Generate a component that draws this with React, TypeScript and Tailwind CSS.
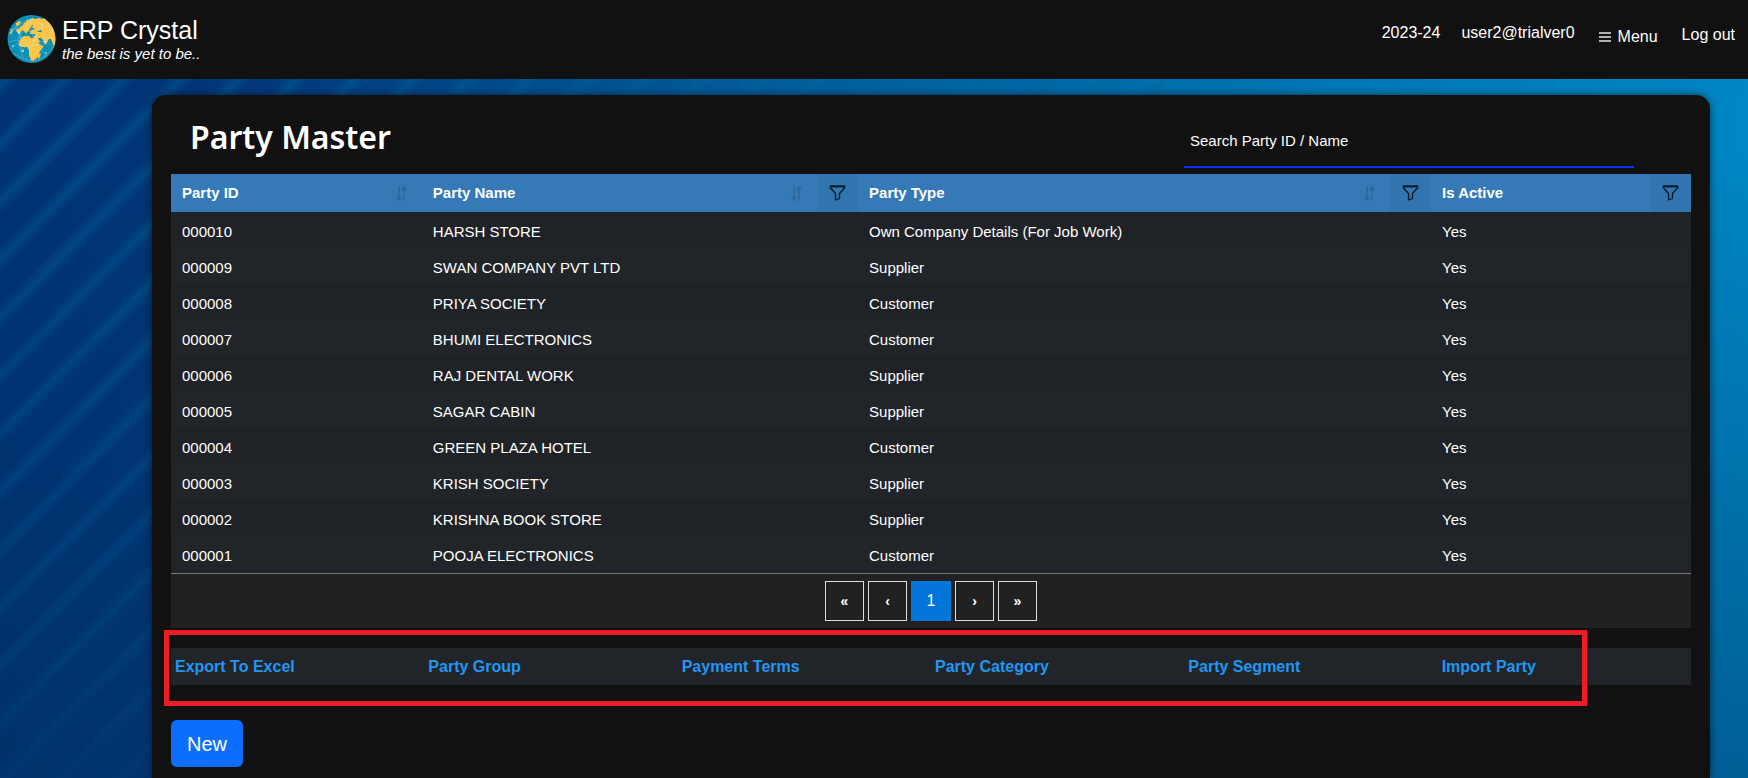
import React from "react";

type Party = { id: string; name: string; type: string };

const parties: Party[] = [
  { id: "000010", name: "HARSH STORE", type: "Own Company Details (For Job Work)" },
  { id: "000009", name: "SWAN COMPANY PVT LTD", type: "Supplier" },
  { id: "000008", name: "PRIYA SOCIETY", type: "Customer" },
  { id: "000007", name: "BHUMI ELECTRONICS", type: "Customer" },
  { id: "000006", name: "RAJ DENTAL WORK", type: "Supplier" },
  { id: "000005", name: "SAGAR CABIN", type: "Supplier" },
  { id: "000004", name: "GREEN PLAZA HOTEL", type: "Customer" },
  { id: "000003", name: "KRISH SOCIETY", type: "Supplier" },
  { id: "000002", name: "KRISHNA BOOK STORE", type: "Supplier" },
  { id: "000001", name: "POOJA ELECTRONICS", type: "Customer" },
];

const links = ["Export To Excel", "Party Group", "Payment Terms", "Party Category", "Party Segment", "Import Party"];

function Globe() {
  return (
    <svg viewBox="0 0 49 48" className="h-12 w-[49px] shrink-0" aria-hidden="true">
      <defs>
        <clipPath id="globe">
          <circle cx="24.5" cy="24" r="24" />
        </clipPath>
      </defs>
      <g clipPath="url(#globe)">
        <rect width="49" height="48" fill="#0a8fb5" />
        <g fill="#fdc543">
          <path d="M22 6l3-3 4 1 3-1 3 1 4-2 10 9v21l-2-1-2-4-1-3-2 0-3 5-1 1-2-5-2-2-3 0 2 4-3 2-3-6-1-3-3 0-1-1 2-2-2-1-2 1-1 2-2-3-2-1-1 2-3 1-2-2 1-2 3 0 0-2 3-2 1-2 2-1 1-3z" />
          <path d="M14 23l3-2 5 0 2 2 4 0 2 1 3 6 4 1-4 5-1 4-3 4-3 2-2-1-2-5 0-5-2-3-6 0-2-3z" />
          <path d="M34 38l-3 2 0 4 2-2zM9 8l3-2 2 1-2 3-3 1zM3 18l2-4 1 1-2 5zM17 11l2 1 0 3-3 1z" />
        </g>
        <path d="M23 13l2-3 1 0-1 3 3 0-2 2-4 1zM18 19l3-1 3 1 4 0 0 2-4 0-4-1zM30 16l4-1 1 2-4 0z" fill="#1789a4" />
        <g fill="none" stroke="#bfe6e8" strokeWidth=".5" opacity=".65">
          <path d="M2 18l10-8 11-6 12 5 11 8-8 9 9 6-8 9-12 6-12-4-12-6-7-9 5-13 11-2 2 12-11 10-7-7 14-3 12 6 14-2M12 10l0 13 11-19M23 37l4-12-4-21M35 9l-8 16 11 2-3-18M12 37l15-12M16 43l-5-20M39 41l-12-16M37 2l9 15M7 10l6 8" />
        </g>
        <g fill="#e4f7f5">
          <circle cx="12" cy="18" r=".9" /><circle cx="6" cy="31" r=".8" /><circle cx="16" cy="36" r=".9" />
          <circle cx="27" cy="25" r=".7" /><circle cx="35" cy="9" r=".7" /><circle cx="39" cy="38" r=".8" />
          <circle cx="23" cy="5" r=".7" /><circle cx="12" cy="30" r=".7" /><circle cx="38" cy="27" r=".7" />
        </g>
      </g>
    </svg>
  );
}

function SortIcon() {
  return (
    <svg viewBox="0 0 11 15" className="h-[15px] w-[11px] opacity-15" fill="none" stroke="#000000" strokeWidth="1.6" aria-hidden="true">
      <path d="M3 0v13M0.500 11L3 13.700l2.500-2.700M8 15V1.500M5.500 4L8 1.300 10.500 4" />
    </svg>
  );
}

function FilterIcon() {
  return (
    <svg viewBox="0 0 17 16" className="h-4 w-[17px]" fill="none" stroke="#0d1a26" strokeWidth="1.3" strokeLinejoin="round" aria-hidden="true">
      <path d="M1.300 1.200h14.400v1.600L10.500 8.500v5L6.500 15V8.500L1.300 2.800z" />
      <path d="M1 1.500h15" strokeWidth="1.800" />
    </svg>
  );
}

function HeaderCell({ label, sort, filter }: { label: string; sort?: boolean; filter?: boolean }) {
  return (
    <th scope="col" className="p-0 text-left font-bold">
      <div className="flex h-[38px] items-center">
        <span className="flex-1 pl-[11px]">{label}</span>
        {sort && (
          <button type="button" aria-label={`Sort by ${label}`} className="mr-[15px]">
            <SortIcon />
          </button>
        )}
        {filter && (
          <button type="button" aria-label={`Filter ${label}`} className="flex h-full w-[41px] items-center justify-center bg-[#3175b0]">
            <FilterIcon />
          </button>
        )}
      </div>
    </th>
  );
}

const pageButton = "h-10 w-[39px] border border-[#dddddd] bg-[#212121] text-sm font-bold";

export default function App() {
  return (
    <div className="flex min-h-screen flex-col overflow-hidden bg-[#003070] font-['Liberation_Sans',Arial,sans-serif] text-white">
      <header className="flex h-[79px] shrink-0 items-start justify-between bg-[#111111] pl-[7px] pr-[13px]">
        <div className="flex gap-[6px] pt-[15px]">
          <Globe />
          <div>
            <div className="text-[25px] leading-[30px]">ERP Crystal</div>
            <div className="text-[15px] italic leading-[18px]">the best is yet to be..</div>
          </div>
        </div>
        <nav className="flex text-base leading-6">
          <span className="mr-[21px] pt-[21px]">2023-24</span>
          <span className="mr-6 pt-[21px]">user2@trialver0</span>
          <button type="button" className="mr-6 flex items-center gap-[7px] pt-[25px]">
            <svg viewBox="0 0 12 11" className="h-[11px] w-3" fill="#b0b0b0" aria-hidden="true">
              <path d="M0 0h12v2H0zM0 4h12v2H0zM0 8h12v2H0z" />
            </svg>
            Menu
          </button>
          <a href="#logout" className="pt-[23px]">Log out</a>
        </nav>
      </header>

      <div className="relative flex flex-1 bg-[linear-gradient(180deg,#00306000_10%,#0030607a_100%),linear-gradient(95deg,#003274_0%,#00397b_14%,#005a99_40%,#0078b6_75%,#0089c6_100%)] pl-[152px] pr-[38px] pt-4">
        <div className="absolute inset-y-0 left-0 w-2/3 bg-[repeating-linear-gradient(135deg,#00689a00_-5px,#00689a60_5px,#00689a00_15px,#00689a00_36px)] mask-[linear-gradient(170deg,black_20%,transparent_100%)]" />
        <main className="relative min-w-0 flex-1 rounded-t-[14px] bg-[#111111] px-[19px] shadow-[0_0_8px_#00000090]">
          <div className="flex h-[79px] justify-between pl-[19px] pr-[57px]">
            <h1 className="pt-[19px] font-['Noto_Sans',sans-serif] text-[32px] font-semibold leading-[46px]">Party Master</h1>
            <input
              type="text"
              aria-label="Search Party ID / Name"
              placeholder="Search Party ID / Name"
              className="mt-[19px] h-[54px] w-[450px] border-b-2 border-[#0433ff] bg-transparent px-[6px] text-[15px] placeholder:text-white focus:outline-none"
            />
          </div>

          <div className="bg-[#212529] pb-px">
            <table className="w-full table-fixed border-collapse text-[15px]">
              <colgroup>
                <col className="w-[16.500%]" />
                <col className="w-[28.700%]" />
                <col className="w-[37.700%]" />
                <col className="w-[17.100%]" />
              </colgroup>
              <thead className="bg-[#357ab7]">
                <tr>
                  <HeaderCell label="Party ID" sort />
                  <HeaderCell label="Party Name" sort filter />
                  <HeaderCell label="Party Type" sort filter />
                  <HeaderCell label="Is Active" filter />
                </tr>
              </thead>
              <tbody>
                {parties.map((p) => (
                  <tr key={p.id} className="h-9 odd:bg-[#1f2226] even:bg-[#212529]">
                    <td className="pl-[11px] pt-1">{p.id}</td>
                    <td className="pl-[11px] pt-1">{p.name}</td>
                    <td className="pl-[11px] pt-1">{p.type}</td>
                    <td className="pl-[11px] pt-1">Yes</td>
                  </tr>
                ))}
              </tbody>
            </table>
          </div>

          <div className="flex h-[55px] items-start justify-center gap-1 border-t border-[#777777] bg-[#212121] pt-[7px]">
            <button type="button" aria-label="First page" className={pageButton}>«</button>
            <button type="button" aria-label="Previous page" className={pageButton}>‹</button>
            <button type="button" aria-current="page" className="h-10 w-10 bg-[#0275d8] text-base">1</button>
            <button type="button" aria-label="Next page" className={pageButton}>›</button>
            <button type="button" aria-label="Last page" className={pageButton}>»</button>
          </div>

          <div className="relative mt-5 grid h-[37px] grid-cols-6 items-center bg-[#212529]">
            {links.map((label) => (
              <a key={label} href="#party" className="pl-1 text-base font-bold text-[#2196f3]">{label}</a>
            ))}
            <div className="pointer-events-none absolute -bottom-[21px] -left-[7px] -top-[18px] right-[104px] border-[5px] border-[#ee1c24]" />
          </div>

          <button type="button" className="mb-1 mt-[35px] h-[47px] rounded-md bg-[#0d6efd] px-4 text-xl">New</button>
        </main>
      </div>
    </div>
  );
}
